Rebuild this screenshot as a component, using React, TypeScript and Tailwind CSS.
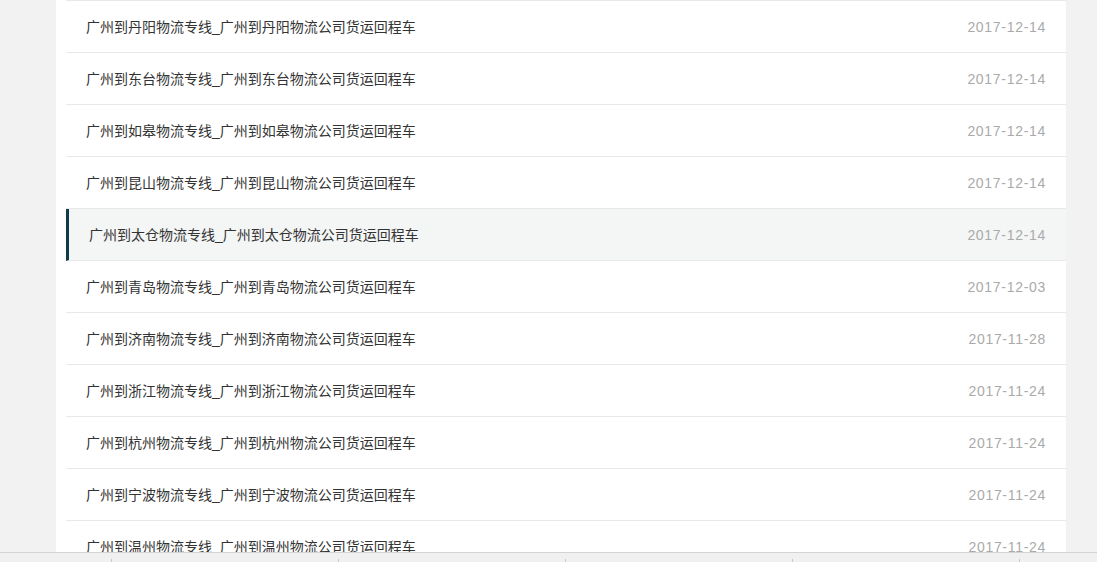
import React from "react";

const rows: [string, string][] = [
  ["丹阳", "2017-12-14"],
  ["东台", "2017-12-14"],
  ["如皋", "2017-12-14"],
  ["昆山", "2017-12-14"],
  ["太仓", "2017-12-14"],
  ["青岛", "2017-12-03"],
  ["济南", "2017-11-28"],
  ["浙江", "2017-11-24"],
  ["杭州", "2017-11-24"],
  ["宁波", "2017-11-24"],
  ["温州", "2017-11-24"],
];

export default function App() {
  return (
    <div
      className="min-h-[562px] bg-[#f2f2f2]"
      style={{ fontFamily: '"Liberation Sans", "Noto Sans CJK SC", sans-serif' }}
    >
      <div className="ml-[56px] w-[1010px] bg-white pl-[10px]">
        <ul className="border-t border-[#e8e8e8]">
          {rows.map(([city, date], i) => {
            const active = i === 4;
            return (
              <li
                key={i}
                className={
                  active
                    ? "flex h-[52px] items-center justify-between border-b border-[#e8e8e8] border-l-[3px] border-l-[#0f3b4a] bg-[#f4f5f5] pl-[20px] pr-[20px] pt-[2px]"
                    : "flex h-[52px] items-center justify-between border-b border-[#e8e8e8] pl-[20px] pr-[20px] pt-[2px]"
                }
              >
                <span className="text-[14px] text-[#333333]">
                  广州到{city}物流专线_广州到{city}物流公司货运回程车
                </span>
                <span className="text-[14px] tracking-[0.7px] text-[#aaaaaa]">{date}</span>
              </li>
            );
          })}
        </ul>
      </div>
      <div className="fixed bottom-0 left-0 right-0 flex h-[10px] items-end border-t border-[#d3d3d3] bg-[#f0f0f0] pl-[111px]">
        {[0, 1, 2, 3, 4].map((k) => (
          <div key={k} className="h-[3px] w-[227px] shrink-0 border-l border-[#c8c8c8]" />
        ))}
      </div>
    </div>
  );
}
